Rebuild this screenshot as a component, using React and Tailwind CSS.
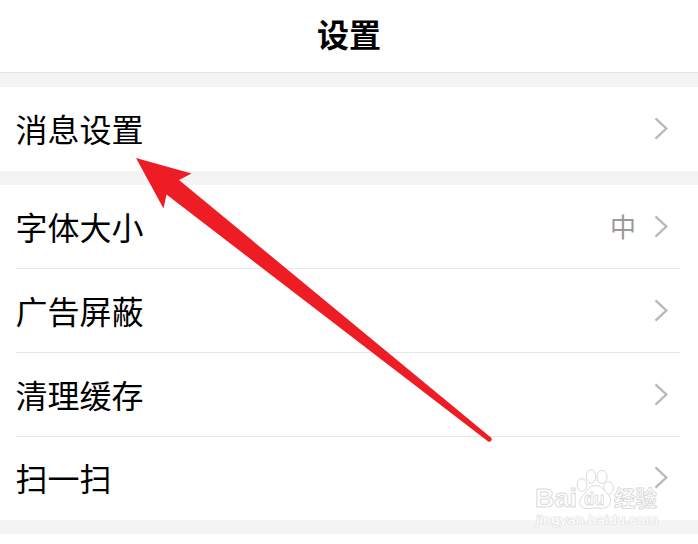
import React from 'react';

const ROWS = [
  { label: '字体大小', value: '中' },
  { label: '广告屏蔽' },
  { label: '清理缓存' },
  { label: '扫一扫', last: true },
];

function Chevron() {
  return (
    <svg className="h-[24px] w-[16px] shrink-0" viewBox="0 0 16 24" fill="none" stroke="#b9b9b9" strokeWidth="2.4">
      <path d="M1.500 1.300 L12.300 11.500 L1.500 21.700" />
    </svg>
  );
}

function Row({ label, value, last, divided }) {
  return (
    <div className={`bg-white pl-[15.5px] pr-[18px] ${last ? 'h-[83px]' : 'h-[84px]'}`}>
      <div className={`flex h-full items-center border-b pr-2.5 ${divided ? 'border-[#e9e9e9]' : 'border-transparent'}`}>
        <span className="flex-1 pb-[2px] text-[32px] leading-[46px] text-black">{label}</span>
        {value && <span className="mr-[18px] pb-[1px] text-[26px] leading-[38px] text-[#999]">{value}</span>}
        <Chevron />
      </div>
    </div>
  );
}

function Watermark() {
  return (
    <svg
      className="absolute left-[530px] top-[465px] h-[68px] w-[134px]"
      viewBox="530 465 134 68"
      fill="#fff"
      stroke="#dadada"
      strokeWidth="1"
      strokeLinejoin="round"
    >
      <g strokeWidth="0.900" fontWeight="700">
        <text x="535" y="507" fontSize="26" textLength="42" lengthAdjust="spacingAndGlyphs" fontFamily="Liberation Sans, sans-serif">Bai</text>
        <text x="614" y="506" fontSize="21.5" textLength="43" lengthAdjust="spacingAndGlyphs" fontFamily="Noto Sans CJK SC, sans-serif">经验</text>
      </g>
      <ellipse cx="582" cy="485" rx="4.8" ry="6.3" />
      <ellipse cx="591" cy="476.5" rx="4.8" ry="6.6" />
      <ellipse cx="602" cy="477" rx="5" ry="6.6" />
      <ellipse cx="608.5" cy="488" rx="4.8" ry="6.3" />
      <path d="M595.500 485.500 C589 485.500 587.500 491 583.500 495 C578 499 578 508 586 508.500 C591 509 594 507.500 598 508 C604 509 610 508 610.500 501 C611 495 605.500 493 602.500 488.500 C601 486.500 598.500 485.500 595.500 485.500 Z" />
      <text x="584" y="505" fontSize="18" fontWeight="700" strokeWidth="0.800" textLength="20.5" lengthAdjust="spacingAndGlyphs" fontFamily="Liberation Sans, sans-serif">du</text>
      <text className="[paint-order:stroke]" x="536" y="524" fontSize="13" strokeWidth="1.2" stroke="#e2e2e2" textLength="122" lengthAdjust="spacingAndGlyphs" fontFamily="Liberation Sans, sans-serif">jingyan.baidu.com</text>
    </svg>
  );
}

export default function App() {
  return (
    <main className="relative h-[544px] w-[698px] overflow-hidden bg-white font-['Noto_Sans_CJK_SC',sans-serif]">
      <header className="flex h-[73px] items-center justify-center border-b border-[#e5e5e5] bg-white">
        <h1 className="pb-[7px] text-[32px] font-bold leading-[46px] text-black">设置</h1>
      </header>
      <div className="h-3.5 bg-[#f4f4f4]" />
      <Row label="消息设置" />
      <div className="h-3.5 bg-[#f4f4f4]" />
      {ROWS.map((row) => (
        <Row key={row.label} label={row.label} value={row.value} last={row.last} divided={!row.last} />
      ))}
      <div className="h-3.5 bg-[#f4f4f4]" />
      <Watermark />
      <svg className="absolute left-0 top-0 h-[544px] w-[698px]" viewBox="0 0 698 544" fill="#ee1c24">
        <path d="M136 158 L191.500 173.500 L179 180 L491.200 437.800 A2.500 2.500 0 0 1 488.200 441.600 L166.500 194.500 L163.500 208.500 Z" />
      </svg>
    </main>
  );
}
